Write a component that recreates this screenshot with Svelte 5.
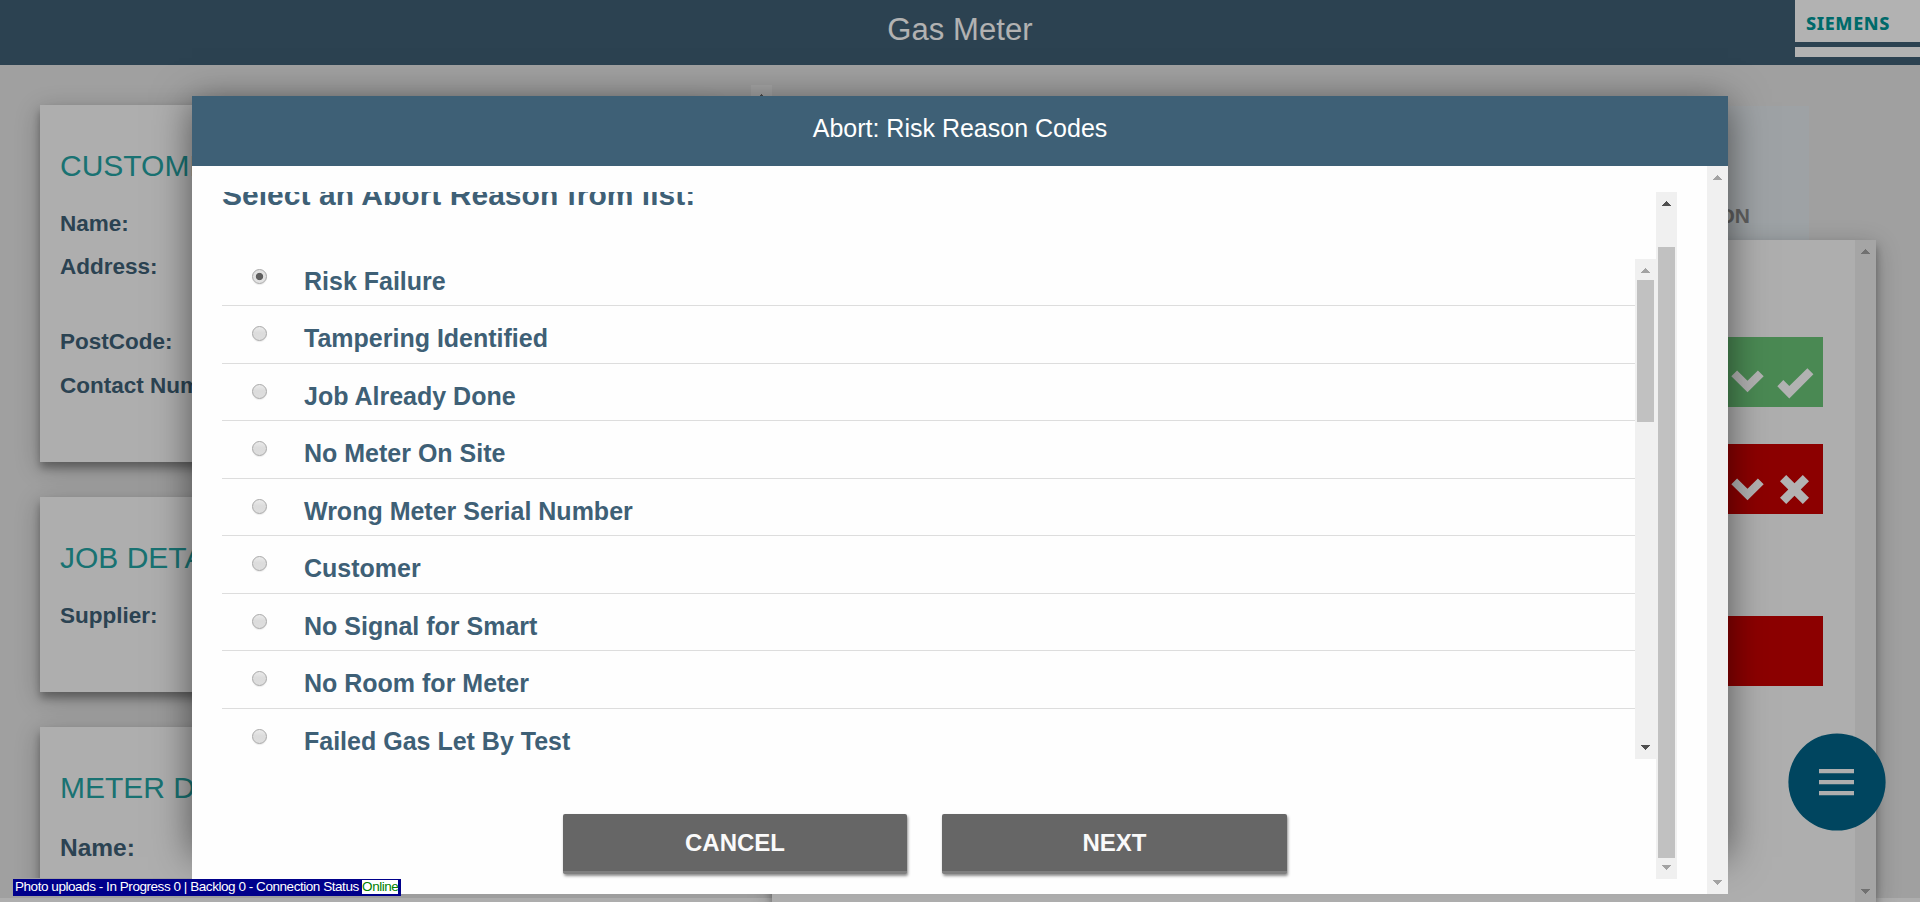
<script>
  const cards = [
    { title: 'CUSTOMER DETAILS', cls: 'customer', rows: ['Name:', 'Address:', 'PostCode:', 'Contact Number:'] },
    { title: 'JOB DETAILS', cls: 'job', rows: ['Supplier:'] },
    { title: 'METER DETAILS', cls: 'meter', rows: ['Name:'] }
  ];
  const reasons = [
    'Risk Failure',
    'Tampering Identified',
    'Job Already Done',
    'No Meter On Site',
    'Wrong Meter Serial Number',
    'Customer',
    'No Signal for Smart',
    'No Room for Meter',
    'Failed Gas Let By Test'
  ];
  let selected = $state('Risk Failure');
</script>

{#snippet arrow(down, color)}
  <svg class="arrow" width="9" height="5" viewBox="0 0 9 5" shape-rendering="crispEdges">
    <path d={down ? 'M0 0h9v1h-1v1h-1v1h-1v1h-1v1h-1v-1h-1v-1h-1v-1h-1v-1h-1z' : 'M4 0h1v1h1v1h1v1h1v1h1v1h-9v-1h1v-1h1v-1h1v-1h1z'} fill={color} />
  </svg>
{/snippet}

{#snippet chevron()}
  <svg width="33" height="23" viewBox="0 0 33 23"><path d="M.3 6.2 6.1.4 16.5 10.7 26.9.4l5.8 5.8L16.5 22.3z" fill="#fff" /></svg>
{/snippet}

<div class="page">
  <div class="strip"></div>
  <header class="topbar">
    <h1>Gas Meter</h1>
    <div class="logo"><span>SIEMENS</span><i></i></div>
  </header>

  <main>
    <section class="left">
      <div class="cards">
        {#each cards as card}
          <article class="card {card.cls}">
            <h2>{card.title}</h2>
            {#each card.rows as row}
              <p class:tall={row === 'Address:'}>{row}</p>
            {/each}
          </article>
        {/each}
      </div>
      <div class="bar leftbar">{@render arrow(false, '#717171')}</div>
    </section>

    <section class="right">
      <div class="tab">ON</div>
      <div class="panel">
        <div class="steps">
          <div class="step ok">
            {@render chevron()}
            <svg class="tick" width="37" height="31" viewBox="0 0 37 31"><path d="M.3 18.2 6.3 12l6 6L30.4.3l6 6L12.3 30.4z" fill="#fff" /></svg>
          </div>
          <div class="step bad">
            {@render chevron()}
            <svg class="cross" width="29" height="29" viewBox="0 0 29 29"><path d="M0 6.2 6.2 0l8.3 8.3L22.8 0 29 6.2l-8.3 8.3 8.3 8.3-6.2 6.2-8.3-8.3L6.2 29 0 22.8l8.3-8.3z" fill="#fff" /></svg>
          </div>
          <div class="step bad empty"></div>
        </div>
        <div class="bar panelbar">
          {@render arrow(false, '#a2a2a2')}
          {@render arrow(true, '#a2a2a2')}
        </div>
      </div>
    </section>
  </main>

  <button class="fab" aria-label="Menu">
    <svg width="98" height="98" viewBox="0 0 98 98">
      <circle cx="49" cy="49" r="48.6" fill="#006488" />
      <path d="M31 36h35v4.3h-35zM31 47h35v4.3h-35zM31 58h35v4.3h-35z" fill="#fafafa" />
    </svg>
  </button>
  <div class="shade"></div>

  <div class="modalshadow"></div>
  <div class="modal">
    <div class="modalhead">Abort: Risk Reason Codes</div>
    <div class="modalbody">
      <div class="scroller">
        <div class="content">
          <h3>Select an Abort Reason from list:</h3>
          <div class="listwrap">
            <div class="list">
              {#each reasons as reason}
                <label class="reason">
                  <input type="radio" name="reason" value={reason} bind:group={selected} />
                  <span>{reason}</span>
                </label>
              {/each}
            </div>
            <div class="bar listbar">
              {@render arrow(false, '#a3a3a3')}
              <b></b>
              {@render arrow(true, '#505050')}
            </div>
          </div>
          <div class="actions">
            <button class="action">CANCEL</button>
            <button class="action next">NEXT</button>
          </div>
        </div>
        <div class="bar innerbar">
          {@render arrow(false, '#505050')}
          <b></b>
          {@render arrow(true, '#a3a3a3')}
        </div>
      </div>
      <div class="bar bodybar">
        {@render arrow(false, '#a3a3a3')}
        {@render arrow(true, '#a3a3a3')}
      </div>
    </div>
  </div>

  <div class="status">Photo uploads - In Progress 0 | Backlog 0 - Connection Status <em>Online</em></div>
</div>

<style>
  :global(body) { margin: 0; overflow: hidden; }
  .page, .page * { box-sizing: border-box; }
  .page {
    position: relative;
    width: 1920px;
    height: 902px;
    overflow: hidden;
    display: flex;
    flex-direction: column;
    background: #e5e5e5;
    color: #3e6076;
    font-family: "Liberation Sans", Arial, sans-serif;
  }
  h1, h2, h3, p { margin: 0; }
  .topbar {
    flex: none;
    height: 65px;
    display: grid;
    grid-template-columns: 1fr auto 1fr;
    align-items: start;
    background: #3f5f75;
  }
  h1 { grid-column: 2; font-size: 31px; font-weight: 400; line-height: 60px; letter-spacing: .1px; color: #fff; }
  .logo {
    justify-self: end;
    width: 125px;
    height: 57px;
    background: #fff;
    color: #009999;
    font: 800 18px/22px "Noto Sans", sans-serif;
    padding-top: 12px;
  }
  .logo span { display: block; padding-left: 11px; height: 30px; letter-spacing: .6px; }
  .logo i { display: block; height: 5px; background: #3f5f75; }
  main { position: relative; flex: 1; display: flex; min-height: 0; }
  .left { width: 772px; display: flex; padding-top: 20px; height: 813px; }
  .cards {
    width: 751px;
    padding: 20px 40px 0;
    display: flex;
    flex-direction: column;
    gap: 35px;
    overflow: hidden;
  }
  .card {
    flex: none;
    padding: 41px 20px 0;
    background: #fafafa;
    box-shadow: 0 6px 8px rgba(0, 0, 0, .3), 0 6px 24px rgba(0, 0, 0, .24);
  }
  .customer { height: 357px; }
  .job { height: 195px; }
  .meter { height: 300px; }
  h2 { margin-bottom: 16px; font-size: 30px; font-weight: 400; line-height: 40px; color: #25a4a4; }
  .card p { height: 43px; font-size: 22.5px; font-weight: 700; line-height: 43px; }
  .card p.tall { height: 75px; }
  .customer p:last-child { line-height: 45px; }
  .meter h2 { margin-bottom: 18px; }
  .meter p { font-size: 24.5px; }
  .bar {
    flex: none;
    width: 21px;
    display: flex;
    flex-direction: column;
    align-items: center;
    background: #f0f0f0;
  }
  .bar .arrow, .bar b { flex: none; }
  .bar b { width: 17px; background: #c1c1c1; }
  .leftbar { height: 793px; padding-top: 9px; background: #efefef; }
  .right { width: 1148px; padding-top: 41px; display: flex; flex-direction: column; }
  .tab {
    flex: none;
    margin-left: 730px;
    width: 307px;
    height: 134px;
    padding-right: 59px;
    background: #e2e9ed;
    color: #8a8a8a;
    font-size: 21px;
    font-weight: 700;
    line-height: 220px;
    text-align: right;
  }
  .panel {
    flex: 1;
    width: 1104px;
    display: flex;
    justify-content: space-between;
    background: #fafafa;
    box-shadow: 0 6px 8px rgba(0, 0, 0, .3), 0 6px 24px rgba(0, 0, 0, .24);
  }
  .steps { width: 1051px; padding: 97px 0 0 50px; display: flex; flex-direction: column; }
  .step { height: 70px; margin-bottom: 37px; padding-right: 9px; display: flex; justify-content: flex-end; align-items: flex-start; }
  .step svg:first-child { margin-top: 33px; }
  .ok { background: #6ac578; }
  .ok .tick { margin: 31px 0 0 13px; }
  .bad { background: #c90000; padding-right: 14px; }
  .bad svg:first-child { margin-top: 34px; }
  .bad .cross { margin: 31px 0 0 16px; }
  .bad.empty { margin-top: 65px; }
  .panelbar { justify-content: space-between; padding: 9px 0 8px; background: #ededed; }
  .strip { position: absolute; left: 0; bottom: 0; width: 1920px; height: 4px; background: #fafafa; }
  .fab { position: absolute; left: 1788px; top: 733px; width: 98px; height: 98px; padding: 0; border: 0; background: none; }
  .fab svg { display: block; }
  .shade { position: absolute; inset: 0; background: rgba(0, 0, 0, .3); }
  .modalshadow { position: absolute; left: 192px; top: 96px; width: 1536px; height: 755px; box-shadow: 0 6px 36px rgba(0, 0, 0, .53); }
  .modal { position: absolute; left: 192px; top: 96px; width: 1536px; height: 798px; display: flex; flex-direction: column; background: #fefefe; }
  .modalhead { flex: none; height: 70px; background: #3e6076; color: #fff; font-size: 25px; line-height: 65px; text-align: center; }
  .modalbody { flex: 1; display: flex; justify-content: space-between; min-height: 0; }
  .scroller { margin: 26px 0 0 30px; width: 1455px; height: 687px; display: flex; overflow: hidden; }
  .content { width: 1434px; }
  h3 { margin: -14px 0 47px; height: 34px; font-size: 30px; font-weight: 700; line-height: 34px; letter-spacing: .03px; white-space: nowrap; }
  .listwrap { height: 500px; display: flex; }
  .list { width: 1413px; overflow: hidden; }
  .reason { height: 57.5px; display: flex; align-items: flex-start; border-bottom: 1px solid #ddd; }
  .reason:first-child { margin-top: -10.5px; }
  .reason:last-child { border-bottom: 0; }
  .reason span { padding: 8px 0 0 37px; font-size: 25px; font-weight: 700; line-height: 48px; }
  .reason input {
    appearance: none;
    flex: none;
    width: 15px;
    height: 15px;
    margin: 20.2px 0 0 30px;
    border: 1px solid #a8a8a8;
    border-radius: 50%;
    background: linear-gradient(#ebebeb, #dcdcdc 45%, #dedede);
    box-shadow: 0 1px 1px rgba(0, 0, 0, .08);
  }
  .reason input:checked { background: radial-gradient(circle at center, #5f5f5f 3.2px, #e2e2e2 4.1px); }
  .listbar { height: 500px; padding: 9px 0; }
  .listbar b { height: 142px; margin-top: 7px; }
  .listbar .arrow:last-child { margin-top: auto; }
  .actions { display: flex; gap: 35px; padding: 55px 0 0 341px; }
  .action {
    width: 344px;
    height: 60px;
    padding: 1px 0 0;
    border: 0;
    border-bottom: 3px solid #808080;
    border-radius: 2px;
    background: #666;
    color: #fafafa;
    font: 700 24px/56px "Liberation Sans", Arial, sans-serif;
    box-shadow: 1px 2px 3px rgba(0, 0, 0, .45);
  }
  .action.next { width: 345px; }
  .innerbar { height: 687px; padding: 9px 0; }
  .innerbar b { height: 611px; margin-top: 41px; }
  .innerbar .arrow:last-child { margin-top: 7px; }
  .bodybar { justify-content: space-between; padding: 9px 0; }
  .status {
    position: absolute;
    left: 13px;
    top: 879px;
    width: 388px;
    height: 17px;
    padding-left: 2px;
    background: #00008b;
    color: #fff;
    font-size: 13.5px;
    letter-spacing: -.45px;
    line-height: 16px;
    white-space: nowrap;
  }
  .status em { display: inline-block; height: 14px; margin-top: 1px; line-height: 14px; background: #fff; color: #008000; font-style: normal; vertical-align: top; }
</style>
